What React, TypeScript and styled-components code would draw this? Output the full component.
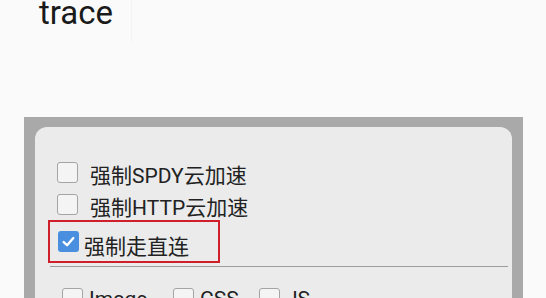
import styled, { createGlobalStyle } from 'styled-components';

const GlobalStyle = createGlobalStyle`
  html, body {
    margin: 0;
    padding: 0;
    background-color: #fafafa;
    overflow: hidden;
  }
  body {
    width: 546px;
    height: 298px;
    font-family: Roboto, 'Noto Sans CJK SC', sans-serif;
    color: #222;
  }
`;

const Page = styled.div`
  display: flex;
  flex-direction: column;
`;

const TitleBar = styled.div`
  flex: none;
  width: 132px;
  height: 42px;
  box-sizing: border-box;
  padding-left: 39px;
  border-right: 1px solid #f4f4f4;
`;

const Title = styled.h1`
  margin: 0;
  font-family: Roboto, 'Noto Sans', sans-serif;
  font-weight: 400;
  font-size: 33px;
  line-height: 25px;
  color: #1a1a1a;
`;

const Frame = styled.div`
  flex: none;
  height: 181px;
  margin: 75px 23px 0 24px;
  background-color: #a9a9a9;
  padding: 10px 11px 0 11px;
  display: flex;
  overflow: hidden;
`;

const Panel = styled.div`
  flex: 1;
  background-color: #ebebeb;
  border-radius: 12px 12px 0 0;
  padding: 29px 4px 0 13px;
  display: flex;
  flex-direction: column;

  & > * {
    flex: none;
  }
`;

const Row = styled.label`
  display: flex;
  align-items: center;
  gap: 12px;
  height: 32px;
  padding-left: 9px;
  font-size: 21px;
  white-space: nowrap;
`;

const RowText = styled.span`
  margin-top: 4px;
`;

const Highlight = styled.div`
  width: 172px;
  height: 43px;
  box-sizing: border-box;
  border: 2px solid #cf1f2b;
  display: flex;
  align-items: center;
  padding-left: 8px;
  margin-top: 0;
`;

const HighlightText = styled.span`
  font-size: 21px;
  margin-left: 5px;
  margin-top: 6px;
`;

const Divider = styled.hr`
  border: none;
  margin: 3px 0 0 2px;
  height: 0;
  border-top: 1.5px solid #9d9d9d;
`;

const TypeRow = styled.div`
  display: flex;
  align-items: flex-start;
  margin: 21px 0 0 14px;
  font-size: 21px;
  white-space: nowrap;
`;

const TypeItem = styled.label<{ $width: number }>`
  display: flex;
  align-items: flex-start;
  gap: 6px;
  width: ${p => p.$width}px;
  line-height: 22px;
`;

const Box = styled.span<{ $checked?: boolean }>`
  flex: none;
  width: 21px;
  height: 21px;
  box-sizing: border-box;
  border-radius: 3px;
  border: ${p => (p.$checked ? 'none' : '1.5px solid #a4a4a4')};
  background-color: ${p => (p.$checked ? '#4a8ee0' : '#f4f4f4')};
  display: grid;
  place-items: center;

  svg {
    width: 15px;
    height: 15px;
  }
`;

const Checkbox = ({ checked }: { checked?: boolean }) => (
  <Box $checked={checked}>
    {checked && (
      <svg viewBox='0 0 14 14'>
        <path d='M2.5 7.5 L5.7 10.5 L11.5 3.8' fill='none' stroke='#fff' strokeWidth='2.2' strokeLinecap='round' strokeLinejoin='round' />
      </svg>
    )}
  </Box>
);

const App = () => (
  <Page>
    <GlobalStyle />
    <TitleBar>
      <Title>trace</Title>
    </TitleBar>
    <Frame>
      <Panel>
        <Row>
          <Checkbox />
          <RowText>强制SPDY云加速</RowText>
        </Row>
        <Row>
          <Checkbox />
          <RowText>强制HTTP云加速</RowText>
        </Row>
        <Highlight>
          <Checkbox checked />
          <HighlightText>强制走直连</HighlightText>
        </Highlight>
        <Divider />
        <TypeRow>
          <TypeItem $width={111}>
            <Checkbox />
            Image
          </TypeItem>
          <TypeItem $width={86}>
            <Checkbox />
            CSS
          </TypeItem>
          <TypeItem $width={80}>
            <Checkbox />
            JS
          </TypeItem>
        </TypeRow>
      </Panel>
    </Frame>
  </Page>
);

export default App;
